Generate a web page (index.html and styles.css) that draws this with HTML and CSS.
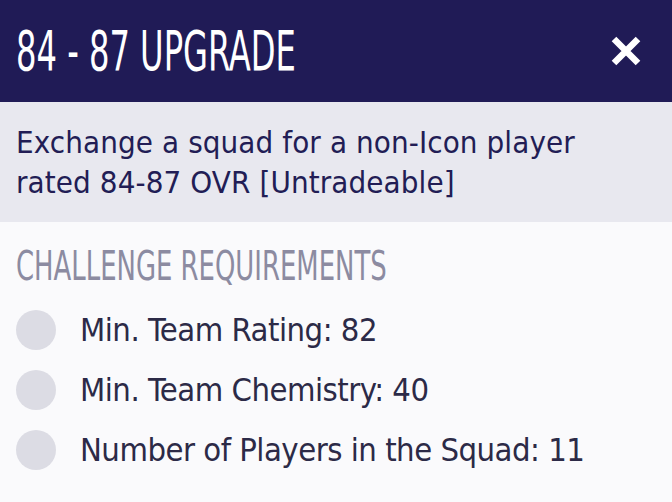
FILE: index.html
```html
<!DOCTYPE html>
<html>
<head>
<meta charset="utf-8">
<link rel="stylesheet" href="styles.css">
</head>
<body>
<div class="panel">
  <header class="header">
    <h1 class="title"><span class="cond">84 - 87 UPGRADE</span></h1>
    <button class="close" aria-label="Close">
      <svg width="32" height="32" viewBox="0 0 32 32"><path d="M4 4 L28 28 M28 4 L4 28" stroke="#fff" stroke-width="6.5" stroke-linecap="butt"/></svg>
    </button>
  </header>
  <div class="desc"><p class="desc-text">Exchange a squad for a non-Icon player rated 84-87 OVR [Untradeable]</p></div>
  <section class="reqs">
    <h2 class="reqs-title"><span class="cond">CHALLENGE REQUIREMENTS</span></h2>
    <ul class="list">
      <li class="item"><span class="dot"></span><span class="label">Min. Team Rating: 82</span></li>
      <li class="item"><span class="dot"></span><span class="label">Min. Team Chemistry: 40</span></li>
      <li class="item"><span class="dot"></span><span class="label">Number of Players in the Squad: 11</span></li>
    </ul>
  </section>
</div>
</body>
</html>
```
FILE: styles.css
```css
html, body { margin: 0; padding: 0; }
body {
  background: #fafafc;
  font-family: "DejaVu Sans Condensed", "DejaVu Sans", sans-serif;
  width: 672px;
  height: 502px;
  overflow: hidden;
}
.cond {
  display: inline-block;
  white-space: nowrap;
  transform-origin: left center;
}
.header {
  height: 102px;
  background: #201b56;
  display: flex;
  align-items: center;
  justify-content: space-between;
  padding: 0 30px 0 16px;
  box-sizing: border-box;
}
.title {
  margin: 0;
  color: #fff;
  font-weight: normal;
  font-size: 55px;
  line-height: 1;
}
.title .cond { transform: scaleX(0.65); }
.close {
  background: none;
  border: 0;
  padding: 0;
  width: 32px;
  height: 32px;
  display: flex;
}
.desc {
  background: #e8e8ef;
  color: #221d55;
  padding: 20px 16px 20px;
}
.desc-text {
  margin: 0;
  max-width: 600px;
  font-size: 31px;
  line-height: 40px;
  letter-spacing: 0.1px;
}
.reqs { padding: 22px 16px 0; }
.reqs-title {
  margin: 0 0 22px;
  color: #8c8ba1;
  font-weight: normal;
  font-size: 40px;
  line-height: 44px;
}
.reqs-title .cond { transform: scaleX(0.72); }
.list { list-style: none; margin: 0; padding: 0; display: flex; flex-direction: column; gap: 20px; }
.item { display: flex; align-items: center; gap: 24px; height: 40px; }
.dot { width: 40px; height: 40px; border-radius: 50%; background: #dcdce4; flex: none; }
.label { color: #2c2a47; font-size: 32.5px; letter-spacing: -0.5px; }
```
